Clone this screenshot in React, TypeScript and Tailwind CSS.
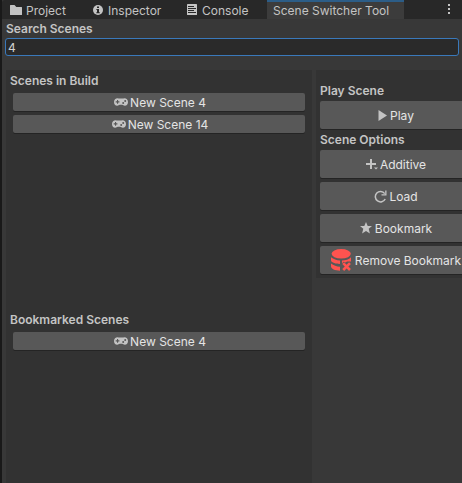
import type { ReactNode } from "react";

function Gamepad() {
  return (
    <svg width="14" height="8" viewBox="0 0 14 8" className="shrink-0">
      <path
        fillRule="evenodd"
        fill="#c4c4c4"
        d="M3.6 .2C1.5 .2 0 1.9 0 4s1.3 3.7 3.2 3.7c1.2 0 1.7-.9 2.6-.9h2.4c.9 0 1.4 .9 2.6 .9C12.700 7.700 14 6.100 14 4S12.500 .2 10.400 .2c-.8 0-1.200 .4-2 .4H5.600C4.800 .6 4.400 .2 3.600 .2ZM3 2h1.100v1.300h1.300v1.100H4.100v1.300H3V4.400H1.700V3.300H3ZM11.200 1.900a1 1 0 1 1 0 2 1 1 0 0 1 0-2ZM9.200 4a1 1 0 1 1 0 2 1 1 0 0 1 0-2Z"
      />
    </svg>
  );
}

function SceneButton({ label }: { label: string }) {
  return (
    <button className="flex h-[18px] w-[292px] items-center justify-center gap-[2px] rounded-[2px] bg-[#585858] pl-[2px] text-[12px] leading-[18px] text-[#e4e4e4] shadow-[0_1px_0_#242424]">
      <Gamepad />
      <span className="relative top-px">{label}</span>
    </button>
  );
}

function ActionButton({ icon, label, gap = "gap-[2px]" }: { icon: ReactNode; label: string; gap?: string }) {
  return (
    <button className={`flex h-7 w-[151px] shrink-0 items-center justify-center whitespace-nowrap rounded-[2px] bg-[#585858] pl-px text-[12px] leading-[18px] text-[#e4e4e4] shadow-[0_1px_0_#242424] ${gap}`}>
      {icon}
      <span className="relative top-px">{label}</span>
    </button>
  );
}

function Heading({ children }: { children: ReactNode }) {
  return <h2 className="h-4 whitespace-nowrap text-[12px] font-semibold leading-4 text-[#c4c4c4]">{children}</h2>;
}

export default function App() {
  return (
    <div className="flex h-[483px] w-[462px] flex-col overflow-hidden border-l-2 border-[#191919] bg-[#383838] font-['Inter',sans-serif] text-[12px] text-[#c4c4c4]">
      <nav className="flex h-[19px] shrink-0 rounded-tl-[3px] bg-[#282828] leading-[19px] whitespace-nowrap">
        <div className="flex w-[83px] pl-2">
          <svg width="12" height="10" viewBox="0 0 12 10" className="mt-[5px] mr-1 shrink-0">
            <path fill="#c4c4c4" d="M0 .5Q0 0 .5 0H4.500L6.300 2H11.500Q12 2 12 2.500V9.500Q12 10 11.500 10H.5Q0 10 0 9.500Z" />
          </svg>
          <span className="relative top-px">Project</span>
        </div>
        <div className="flex w-[94px] pl-2">
          <svg width="10" height="10" viewBox="0 0 10 10" className="mt-[5px] mr-[5px] shrink-0">
            <circle cx="5" cy="5" r="5" fill="#c4c4c4" />
            <path fill="#282828" d="M4 1.500h2v1.600H4ZM3.400 4H6v3.300h.8v1H3.300v-1H4V5h-.6Z" />
          </svg>
          <span className="relative top-px">Inspector</span>
        </div>
        <div className="flex w-[88px] pl-2">
          <svg width="10" height="11" viewBox="0 0 10 11" className="mt-1 mr-[5px] shrink-0">
            <rect width="10" height="11" rx=".6" fill="#c4c4c4" />
            <path fill="none" stroke="#282828" strokeWidth="1" d="M1 2.500H7M1 4.500H9M1 6.500H7M1 8.500H9" />
          </svg>
          <span className="relative top-px">Console</span>
        </div>
        <div className="w-[137px] border-t-2 border-[#2c5d87] bg-[#3c3c3c] pl-[6px] leading-[17px]">
          <span>Scene Switcher Tool</span>
        </div>
        <div className="flex flex-1 flex-col items-end gap-[2px] pt-1 pr-3">
          <i className="h-[2px] w-[2px] bg-[#c4c4c4]" />
          <i className="h-[2px] w-[2px] bg-[#c4c4c4]" />
          <i className="h-[2px] w-[2px] bg-[#c4c4c4]" />
        </div>
      </nav>
      <div className="h-[51px] shrink-0 pt-[2px] pl-[3px]">
        <div className="pl-px"><Heading>Search Scenes</Heading></div>
        <input
          aria-label="Search Scenes"
          defaultValue="4"
          className="mt-px block h-[18px] w-[454px] rounded-[3px] border border-[#3a79bb] bg-[#2a2a2a] pt-px pl-[2px] text-[12px] leading-4 text-[#d2d2d2] outline-none"
        />
      </div>
      <main className="flex flex-1 items-start gap-1 pl-1">
        <section className="h-[413px] w-[306px] shrink-0 bg-[#323232] px-1 pt-[3px]">
          <div className="h-[239px]">
            <Heading>Scenes in Build</Heading>
            <div className="flex flex-col gap-1 pt-1 pl-[3px]">
              <SceneButton label="New Scene 4" />
              <SceneButton label="New Scene 14" />
            </div>
          </div>
          <Heading>Bookmarked Scenes</Heading>
          <div className="pt-1 pl-[3px]"><SceneButton label="New Scene 4" /></div>
        </section>
        <aside className="h-[208px] w-[146px] shrink-0 overflow-hidden bg-[#323232] pt-[13px] pl-1">
          <Heading>Play Scene</Heading>
          <div className="pt-[2px] pb-[3px]">
            <ActionButton
              gap="gap-[3px]"
              label="Play"
              icon={<svg width="9" height="11" viewBox="0 0 9 11"><path fill="#c4c4c4" d="M.5 0L9 5.500L.5 11Z" /></svg>}
            />
          </div>
          <Heading>Scene Options</Heading>
          <div className="flex flex-col gap-1 pt-[2px]">
            <ActionButton
              label="Additive"
              icon={<svg width="12" height="12" viewBox="0 0 12 12"><path fill="#c4c4c4" d="M4 1H6V5H10V7H6V11H4V7H0V5H4ZM8 9.500H12L10 11.500Z" /></svg>}
            />
            <ActionButton
              label="Load"
              gap="gap-[2px]"
              icon={
                <svg width="13" height="13" viewBox="0 0 13 13">
                  <path fill="none" stroke="#c4c4c4" strokeWidth="1.500" d="M10.700 3.600A5.200 5.200 0 1 0 11.200 9" />
                  <path fill="#c4c4c4" d="M12.500 .5V5.500H7.500V4.300H11.200V.5Z" />
                </svg>
              }
            />
            <ActionButton
              label="Bookmark"
              gap="gap-[3px]"
              icon={<svg width="12" height="12" viewBox="0 0 12 12"><path fill="#c4c4c4" d="M6 0L7.700 4H12L8.700 6.800L9.900 11.500L6 8.900L2.100 11.500L3.300 6.800L0 4H4.300Z" /></svg>}
            />
            <ActionButton
              label="Remove Bookmark"
              gap="gap-1"
              icon={
                <svg width="20" height="22" viewBox="0 0 20 22" className="shrink-0">
                  <g fill="#ff534f">
                    <ellipse cx="10.200" cy="4.800" rx="9.600" ry="4.800" />
                    <path d="M0 8.200C2.500 10.300 5.500 11.200 9 11.400V15C4 14.800 0 13.500 0 11ZM0 14.500C2.500 16.500 5.500 17.500 9 17.700V21.800C4 21.500 0 20 0 17.300ZM11 11.500C14.500 11.300 18 10.500 20 8.200V12.500H16L14.500 13.500L12.500 12.800L11 14.500Z" />
                  </g>
                  <path stroke="#ff534f" strokeWidth="2.600" d="M12.200 14.200L19 21M19 14.200L12.200 21" />
                </svg>
              }
            />
          </div>
        </aside>
      </main>
    </div>
  );
}
